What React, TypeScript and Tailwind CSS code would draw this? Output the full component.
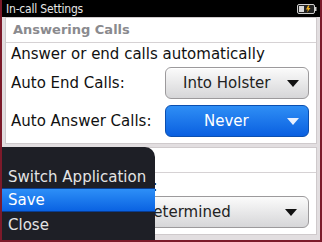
import React from "react";

const font = { fontFamily: '"DejaVu Sans", sans-serif' };

function Caret({ light }: { light?: boolean }) {
    return (
        <svg width="14" height="9" viewBox="0 0 14 9" className="shrink-0">
            <path d="M1 1 H13 L7 8 Z" fill={light ? "#e8f0ff" : "#111"} />
        </svg>
    );
}

function Battery() {
    return (
        <svg width="20" height="10" viewBox="0 0 20 10">
            <rect x="0.5" y="0.5" width="17" height="9" rx="1.5" fill="#222" stroke="#cfcfcf" />
            <rect x="18" y="3" width="1.5" height="4" fill="#cfcfcf" />
            <rect x="2" y="2" width="5" height="6" fill="#d8d8d8" />
            <path d="M11 1.5 L9 5.5 H11 L10 8.5 L13.5 4 H11.5 L12.5 1.5 Z" fill="#f2b01e" />
        </svg>
    );
}

export default function App() {
    return (
        <div
            className="relative w-[322px] h-[242px] overflow-hidden border-2 border-t-0 border-[#7c1a2a] bg-[#e2dee0] flex flex-col"
            style={font}
        >
            <div className="h-[17px] shrink-0 bg-black flex items-center justify-between pl-[4px] pr-[3px]">
                <span className="text-[12px] leading-none text-[#e6e6e6] tracking-[-0.2px]" style={{ fontFamily: '"DejaVu Sans Condensed", "DejaVu Sans", sans-serif' }}>
                    In-call Settings
                </span>
                <Battery />
            </div>

            <div className="flex flex-col gap-[3px] px-[3px]">
                <div className="bg-white border border-[#cfcacc]">
                    <div className="h-[25px] flex items-center pl-[7px] border-b border-[#d6d2d4]">
                        <span className="text-[13px] font-bold text-[#8a8a8e]">Answering Calls</span>
                    </div>
                    <div className="pl-[5px] pr-[7px] pt-[2px] pb-[6px]">
                        <div className="text-[15px] leading-[18px] text-[#111]">Answer or end calls automatically</div>
                        <div className="flex items-center justify-between mt-[4px]">
                            <span className="text-[15px] text-[#111]">Auto End Calls:</span>
                            <div className="w-[144px] h-[32px] rounded-[6px] border border-[#9c9a9c] bg-gradient-to-b from-[#fbfbfb] to-[#d6d6d8] flex items-center justify-between pl-[17px] pr-[8px] shadow-[inset_0_1px_0_#fff]">
                                <span className="text-[15px] text-[#222]">Into Holster</span>
                                <Caret />
                            </div>
                        </div>
                        <div className="flex items-center justify-between mt-[6px]">
                            <span className="text-[15px] text-[#111]">Auto Answer Calls:</span>
                            <div className="w-[144px] h-[32px] rounded-[6px] border border-[#0b4fb0] bg-gradient-to-b from-[#2f8ef5] to-[#0a5fe0] flex items-center pl-[38px] pr-[8px]">
                                <span className="text-[15px] text-white flex-1">Never</span>
                                <Caret light />
                            </div>
                        </div>
                    </div>
                </div>

                <div className="bg-white border border-[#cfcacc] h-[88px]">
                    <div className="h-[25px] border-b border-[#d6d2d4]" />
                    <div className="pl-[5px] pr-[7px] pt-[4px]">
                        <div className="text-[15px] leading-[18px] text-[#111]">Auto Answer Delay:</div>
                        <div className="flex justify-end mt-[1px]">
                            <div className="w-[200px] h-[32px] rounded-[6px] border border-[#9c9a9c] bg-gradient-to-b from-[#fbfbfb] to-[#d6d6d8] flex items-center justify-between pl-[10px] pr-[10px]">
                                <span className="text-[15px] text-[#222]">Predetermined</span>
                                <Caret />
                            </div>
                        </div>
                    </div>
                </div>
            </div>

            <div className="absolute left-0 top-[147px] w-[153px] h-[100px] bg-[#1e1f26] rounded-tr-[10px] pt-[19px] flex flex-col">
                <div className="h-[22px] flex items-center pl-[6px] text-[15px] text-[#e4e4e4]">Switch Application</div>
                <div className="h-[24px] flex items-center pl-[6px] text-[15px] text-white bg-gradient-to-b from-[#2d8ff7] to-[#0a62e2] border-y border-[#0a3c90]">Save</div>
                <div className="h-[26px] flex items-center pl-[6px] text-[15px] text-[#e4e4e4]">Close</div>
            </div>
        </div>
    );
}
